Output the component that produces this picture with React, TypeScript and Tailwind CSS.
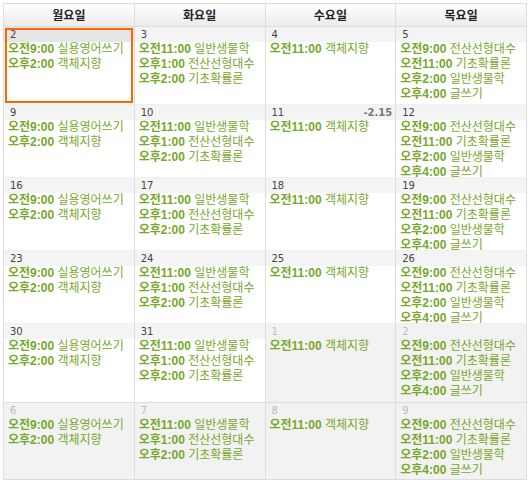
const mon = [
  ["오전9:00", "실용영어쓰기"],
  ["오후2:00", "객체지향"],
];
const tue = [
  ["오전11:00", "일반생물학"],
  ["오후1:00", "전산선형대수"],
  ["오후2:00", "기초확률론"],
];
const wed = [["오전11:00", "객체지향"]];
const thu = [
  ["오전9:00", "전산선형대수"],
  ["오전11:00", "기초확률론"],
  ["오후2:00", "일반생물학"],
  ["오후4:00", "글쓰기"],
];
const schedule = [mon, tue, wed, thu];

type Day = { n: number; other?: boolean; today?: boolean; note?: string };

const weeks: Day[][] = [
  [{ n: 2, today: true }, { n: 3 }, { n: 4 }, { n: 5 }],
  [{ n: 9 }, { n: 10 }, { n: 11, note: "-2.15" }, { n: 12 }],
  [{ n: 16 }, { n: 17 }, { n: 18 }, { n: 19 }],
  [{ n: 23 }, { n: 24 }, { n: 25 }, { n: 26 }],
  [{ n: 30 }, { n: 31 }, { n: 1, other: true }, { n: 2, other: true }],
  [{ n: 6, other: true }, { n: 7, other: true }, { n: 8, other: true }, { n: 9, other: true }],
];

const heads = ["월요일", "화요일", "수요일", "목요일"];

function Cell({ day, col, row }: { day: Day; col: number; row: number }) {
  const bg = day.other ? "bg-[#f2f2f2]" : "bg-white";
  const dayBg = day.other ? "bg-[#f2f2f2]" : day.today ? "bg-[#e6e6e6]" : "bg-[#f4f4f4]";
  // rows followed by another current-month row have a barely visible bottom line
  const bottom = row < 4 ? "border-b-[#f0f0f0]" : "border-b-[#dddddd]";
  return (
    <div className={`relative flex flex-col overflow-hidden border-r border-b border-r-[#dddddd] ${bottom} ${bg}`}>
      <div className={`flex h-[15px] shrink-0 items-center justify-between pl-[6px] pr-[3px] text-[10px] ${dayBg}`} style={{ fontFamily: '"DejaVu Sans", sans-serif' }}>
        <span className={day.other ? "text-[#bbbbbb]" : "text-[#444444]"}>{day.n}</span>
        {day.note && <span className="font-bold text-[#777777]">{day.note}</span>}
      </div>
      <div className="px-[4px] text-[12px] leading-[15px] text-[#76a82a]" style={{ fontFamily: '"Liberation Sans", "Noto Sans CJK KR", sans-serif' }}>
        {schedule[col].map(([t, name]) => (
          <div key={t} className="whitespace-nowrap">
            <span className="font-bold">{t}</span> {name}
          </div>
        ))}
      </div>
      {day.today && <div className="pointer-events-none absolute inset-[1px] border-2 border-[#ff6600]" />}
    </div>
  );
}

export default function App() {
  return (
    <div className="h-[485px] w-[531px] bg-white p-[3px]">
      <div className="grid w-[524px] grid-cols-4 grid-rows-[23px_78px_73px_73px_73px_79px_77px] border-t border-l border-[#dddddd]">
        {heads.map((h) => (
          <div
            key={h}
            className="flex items-center justify-center border-r border-b border-[#dddddd] bg-gradient-to-b from-white to-[#ececec] text-[12px] font-bold text-[#222222]"
            style={{ fontFamily: '"Noto Sans CJK KR", sans-serif' }}
          >
            {h}
          </div>
        ))}
        {weeks.map((w, i) => w.map((d, j) => <Cell key={`${i}-${j}`} day={d} col={j} row={i} />))}
      </div>
    </div>
  );
}
